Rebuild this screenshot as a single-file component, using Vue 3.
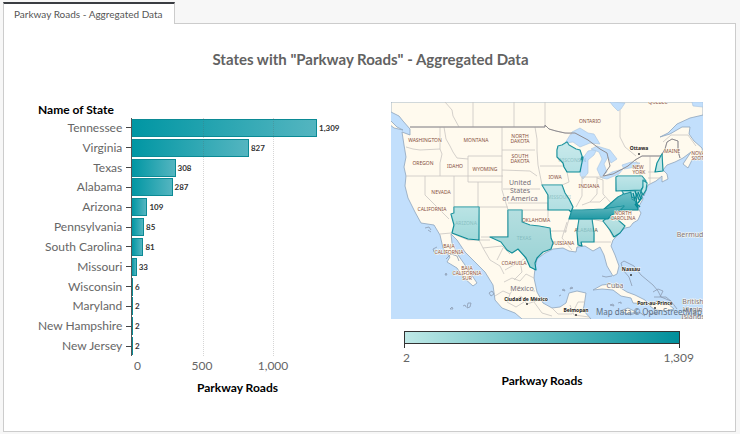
<script setup>
const domainMax = 1500
const rows = [
  ['Tennessee', 1309], ['Virginia', 827], ['Texas', 308], ['Alabama', 287],
  ['Arizona', 109], ['Pennsylvania', 85], ['South Carolina', 81], ['Missouri', 33],
  ['Wisconsin', 6], ['Maryland', 2], ['New Hampshire', 2], ['New Jersey', 2]
].map(([name, value]) => ({ name, value }))
const gridValues = [500, 1000]
const pct = (v) => (v / domainMax) * 100 + '%'
const fmt = (v) => v.toLocaleString('en-US')

const borders = [
  'M410 127H545V125L549 129L556 131L565 133L572 134',
  'M473 102V127M445 102L452 110L453 116L459 127M514 102V127M545 102V127',
  'M406 147L413 149L420 150L440 149V127M444 127L446 139L450 146L453 152L457 158L468 159',
  'M440 149L442 154L440 163V176M406 176H503M468 156V182H502V127M502 156H468M502 150H535M502 170L530 171L537 176',
  'M425 176V195L449 219M454 176V207M478 182V207H508M502 182V190L508 210M478 210V240H490M508 210V237H481',
  'M535 127L537 139L537 151L538 165L542 185M503 189H540M540 166H567M567 172L569 182L562 185M522 210H548M508 203H548L548 222',
  'M582 177V196L576 207M597 177V194L590 202L582 205M582 177H603M597 178L603 180M605 197L600 202L590 202',
  'M551 231H567M567 222L562 238L572 250M569 219L565 233M594 242H611M592 219L605 222M605 222L613 237',
  'M603 180V194L611 203M640 210H603M640 176V166L635 160L642 156H661M650 156V184M655 172H648M648 178H662',
  'M661 156L665 149L667 142L672 139L678 141L678 151L680 158M620 110V137L625 147L636 156',
  'M440 234L451 233L468 240H479M479 240L483 248L490 260L500 266L504 274M483 248L502 246L510 254M497 260L503 248M505 270L519 262L526 258',
  'M504 282L512 278L520 281L526 274L534 278M495 296L503 291L510 294L515 286L525 290L535 291M515 300L521 296L527 304L536 301M552 308L558 314H572L578 302H585',
  'M520 261L522 272L514 280M510 294L507 302L516 307L524 302M534 302L542 313L552 316M570 305L574 315L589 317',
  'M663 142L671 135L688 135L696 146'
]

const coasts = [
  'M391 102H703V115L690 118L677 124L668 133L660 137L670 134L682 127L690 127L689 134L694 141L702 148L703 154L692 160L688 168L683 164L691 152L683 158L675 162L667 165L663 170L667 174L668 179L662 182L662 176L656 181L648 185L644 196L641 190L643 199L638 208L641 213L638 220L633 223L630 227L625 228L618 235L613 240L611 246L615 255L619 266L617 274L613 276L607 266L604 255L600 247L593 251L585 246L577 247L576 252L569 251L563 248L553 249L545 253L537 259L535 268L534 278L537 292L543 303L552 308L560 307L566 303L569 293L577 291L586 293L584 306L583 310L591 319H522L515 313L502 308L495 300L493 285L485 272L473 260L465 252L457 240L451 234L452 243L458 255L465 265L473 277L477 283L473 286L463 277L457 268L447 262L450 257L443 248L440 235L434 225L421 223L415 212L412 206L408 198L405 186L406 176L404 167L406 157L404 145L402 132L410 135L410 129L403 121L399 116L391 112Z',
  'M397 127L389 119V124L394 128L403 130Z',
  'M593 290L602 285L611 284L619 287L627 292L635 295L645 300L648 304L633 303L631 298L621 296L613 290L602 289Z',
  'M650 306L657 301L667 303L674 309L665 311L655 310Z',
  'M620 311L628 308L636 312L628 314Z'
]

const lakes = [
  'M565 143L572 132L580 128L588 133L594 134L600 144L590 143L580 147L573 142Z',
  'M583 158L588 151L597 149L594 155L588 160V173L583 179L580 175Z',
  'M597 146L610 150L617 159L611 163L608 157L604 164L607 172L601 178L597 169L602 159L599 152L591 149Z',
  'M602 178L612 172L623 169L619 174L607 179Z',
  'M622 165L631 162L640 163L636 167L624 169Z',
  'M610 102L625 103L621 109L618 111L613 106Z',
  'M692 102L693 106L703 107V102Z'
]

const islands = [
  'M425 228l4-1 2 3M428 230l3 2M434 252l-1-3 4-2M445 275l1-2 1 2ZM450 309l2-2 1 2ZM463 306l2-1 1 2M467 308l1-5 3 0-1 4Z',
  'M489 293l3-2 2 3-3 2ZM446 259l5-5 6 2 2 5',
  'M602 276l4 1 6-1M621 263l3-2 10 5 7 9 12 10 5 6 3 6 10 4 6 8M621 263l2 7 6 7 3 9M653 292l5-3 5 2-3 6-6 0M660 297l6 0 6 5',
  'M610 305l3-1 1 2ZM618 303l3-1 0 2M562 290l2-1 1 2ZM570 289l1-2 2 1ZM559 296l2-1M647 310l4 4 9-1M630 315l9-3 6 4'
]

const states = [
  { id: 'AZ', fill: '#a0d9da', d: 'M454 207H479V240L468 239L452 233L454 225L451 214L454 213Z' },
  { id: 'TX', fill: '#98d2d4', d: 'M508 210H522V222L530 225L539 226L550 228L551 238L553 243L551 249L543 252L537 258L535 263L536 270L530 267L526 258L518 249L512 253L507 250L501 242L490 237H508Z' },
  { id: 'WI', fill: '#b5e1e4', d: 'M558 146L562 145L567 142L569 145L576 149L580 150L582 156L581 160L583 157L580 172H567L564 167L563 163L557 157V150Z' },
  { id: 'MO', fill: '#afdee1', d: 'M542 185H562L565 193L569 199L573 207L571 212L569 210H548V195L545 190Z' },
  { id: 'AL', fill: '#9dd5d7', d: 'M579 219H592L594 233V242H581L582 246L578 245L577 232Z' },
  { id: 'SC', fill: '#a3d8da', d: 'M603 221L607 218H615L618 220L625 226L620 233L614 237L610 230Z' },
  { id: 'PA', fill: '#a8dce0', d: 'M616 177L618 176H642L646 181L643 187L641 190L616 191Z' },
  { id: 'NH', fill: '#b9e5e5', d: 'M655 172L657 163L662 154L663 171Z' },
  { id: 'NJ', fill: '#b9e5e5', d: 'M643 180L647 183L646 190L643 195L641 191L643 187Z' },
  { id: 'VA', fill: '#3da9b3', d: 'M603 210L611 203L618 197L622 195L626 191L631 193L632 199L637 202L638 210Z' },
  { id: 'MD', fill: '#b0dfe1', d: 'M622 191H640L642 198L639 200L637 193L635 199L632 197L631 192L624 194Z' },
  { id: 'TN', fill: '#239aa5', d: 'M572 210L582 210L604 209L624 206L617 213L611 215L608 219H569Z' }
]

const toPlace = ([name, x, y]) => ({ name, x, y })

const places = [
  ['WASHINGTON', 425, 142], ['MONTANA', 476, 142], ['OREGON', 423, 165], ['IDAHO', 455, 168],
  ['WYOMING', 485, 171], ['NEVADA', 441, 194], ['CALIFORNIA', 432, 211], ['ONTARIO', 590, 123],
  ['IOWA', 555, 179], ['INDIANA', 589, 188], ['MAINE', 672, 153], ['OKLAHOMA', 536, 222],
  ['LOUISIANA', 561, 245], ['ALABAMA', 586, 232], ['NORTH', 520, 138], ['DAKOTA', 520, 143],
  ['SOUTH', 520, 158], ['DAKOTA', 520, 163], ['NEW', 638, 169], ['YORK', 639, 174],
  ['BAJA', 449, 248], ['CALIFORNIA', 449, 254], ['BAJA', 467, 270],
  ['CALIFORNIA', 467, 275], ['SUR', 467, 280], ['COAHUILA', 514, 265], ['NOVA', 698, 155], ['SCOTIA', 700, 160],
  ['QUEBEC', 658, 104]
].map(toPlace)

const placesOverStates = [['NORTH', 623, 215], ['CAROLINA', 623, 220]].map(toPlace)

const faint = [
  ['ARIZONA', 466, 225], ['TEXAS', 524, 240], ['WISCONSIN', 572, 162], ['MISSOURI', 559, 199], ['ALABAMA', 586, 232]
].map(toPlace)

const countries = [
  ['United', 520, 185], ['States', 520, 193], ['of America', 520, 201], ['México', 522, 291], ['Cuba', 615, 288],
  ['Bermuda', 692, 237], ['British', 693, 304], ['Virgin', 693, 312], ['Islands', 693, 319]
].map(toPlace)

const capitals = [
  ['Ottawa', 639, 150, 639, 154], ['Nassau', 631, 271, 631, 275],
  ['Ciudad de México', 526, 301, 527, 304], ['Belmopan', 576, 312, 576, 315],
  ['Port-au-Prince', 655, 305, 655, 308]
].map(([name, x, y, cx, cy]) => ({ name, x, y, cx, cy }))
</script>

<template>
  <div class="page">
    <div class="tabs" role="tablist">
      <button class="tab" type="button" role="tab" aria-selected="true">Parkway Roads - Aggregated Data</button>
      <div class="tab-rest"></div>
    </div>
    <main class="panel">
      <h1 class="title">States with "Parkway Roads" - Aggregated Data</h1>
      <div class="columns">
        <section class="chart">
          <h2 class="heading">Name of State</h2>
          <div class="body">
            <div class="names">
              <div v-for="r in rows" :key="r.name" class="name">{{ r.name }}</div>
            </div>
            <div class="ticks">
              <i v-for="r in rows" :key="r.name" class="tick"></i>
            </div>
            <div class="plot">
              <div v-for="r in rows" :key="r.name" class="row">
                <div class="bar" :style="{ width: pct(r.value) }"></div>
                <span class="value">{{ fmt(r.value) }}</span>
              </div>
              <i v-for="g in gridValues" :key="g" class="grid-line" :style="{ left: pct(g) }"></i>
            </div>
            <div class="axis">
              <span class="zero">0</span>
              <span v-for="g in gridValues" :key="g" class="axis-label" :style="{ left: pct(g) }">{{ fmt(g) }}</span>
            </div>
            <h2 class="heading axis-title">Parkway Roads</h2>
          </div>
        </section>

        <section class="map-side">
          <svg class="map" viewBox="391 102 312 217" role="img" aria-label="Map of parkway roads by state">
            <defs>
              <linearGradient id="shine" x1="0" y1="0" x2="0" y2="1">
                <stop offset="0" stop-color="#fff" stop-opacity="0.28" />
                <stop offset="1" stop-color="#fff" stop-opacity="0" />
              </linearGradient>
            </defs>
            <rect class="sea" x="391" y="102" width="312" height="217" />
            <path v-for="(d, i) in coasts" :key="'c' + i" class="land" :d="d" />
            <path v-for="(d, i) in lakes" :key="'l' + i" class="lake" :d="d" />
            <path v-for="(d, i) in borders" :key="'b' + i" class="border" :d="d" />
            <path class="nation" d="M410 127H545V125L549 129L556 131L565 133L575 133L588 140L600 149L607 153L610 166L603 176L613 174L628 166L635 160L642 156H661L665 149L667 142L672 139L678 141V151L680 158" />
            <path v-for="(d, i) in islands" :key="'i' + i" class="island" :d="d" />
            <text v-for="(p, i) in countries" :key="'n' + i" class="country" :x="p.x" :y="p.y">{{ p.name }}</text>
            <text v-for="(p, i) in places" :key="'p' + i" class="place" :x="p.x" :y="p.y">{{ p.name }}</text>
            <g v-for="s in states" :key="s.id">
              <path class="state" :d="s.d" :fill="s.fill" />
              <path :d="s.d" fill="url(#shine)" />
            </g>
            <path class="bay" d="M635 191L637 197L636 203L640 207M633 193L635 200M638 192L641 199L638 203M635 204L638 208" />
            <text v-for="p in faint" :key="p.name" class="place faint" :x="p.x" :y="p.y">{{ p.name }}</text>
            <text v-for="p in placesOverStates" :key="p.name" class="place" :x="p.x" :y="p.y">{{ p.name }}</text>
            <g v-for="c in capitals" :key="c.name">
              <circle class="dot" :cx="c.cx" :cy="c.cy" r="1" />
              <text class="capital" :x="c.x" :y="c.y">{{ c.name }}</text>
            </g>
            <text class="credit" x="702" y="315">Map data © OpenStreetMap</text>
          </svg>
          <div class="legend">
            <div class="ramp"></div>
            <div class="ends"></div>
            <div class="range"><span class="end">2</span><span class="end">1,309</span></div>
            <h2 class="heading legend-title">Parkway Roads</h2>
          </div>
        </section>
      </div>
    </main>
  </div>
</template>

<style>
body {
  margin: 0;
  background: #f7f7f7;
}
</style>

<style scoped>
.page {
  box-sizing: border-box;
  display: flex;
  flex-direction: column;
  min-height: 100vh;
  padding: 2px 4px 2px 3px;
  font-family: Lato, "Liberation Sans", sans-serif;
  color: #666;
}
.tabs {
  display: flex;
  height: 22px;
}
.tab {
  border: 0;
  border-top: 2px solid #3a3d42;
  border-left: 1px solid #ccc;
  border-right: 1px solid #ccc;
  padding: 0 11px 0 10px;
  background: #fff;
  color: #555;
  font: 10px/18px Lato, "Liberation Sans", sans-serif;
  white-space: nowrap;
}
.tab-rest {
  flex: 1;
  border-bottom: 1px solid #ccc;
}
.panel {
  flex: 1;
  border: 1px solid #ccc;
  border-top: 0;
  padding: 25px 32px 0 34px;
  background: #fff;
}
.title {
  margin: 0 0 33px;
  font-size: 15px;
  line-height: 20px;
  font-weight: 700;
  text-align: center;
  color: #626262;
}
.columns {
  display: grid;
  grid-template-columns: 306fr 312fr;
  gap: 47px;
  align-items: start;
}
.heading {
  margin: 0;
  font-size: 12px;
  line-height: 16px;
  font-weight: 700;
  color: #000;
}
.body {
  display: grid;
  grid-template-columns: 81px 12px 1fr;
  grid-template-rows: 238px auto auto;
}
.names,
.ticks,
.plot {
  display: grid;
  grid-template-rows: repeat(12, 1fr);
  align-items: center;
}
.name {
  font-size: 12px;
  line-height: 18px;
  text-align: right;
  white-space: nowrap;
}
.tick {
  height: 1px;
  margin-left: 7px;
  background: #444;
}
.plot {
  position: relative;
  border-left: 1px solid #555;
}
.row {
  display: flex;
  align-items: center;
  gap: 2px;
}
.bar {
  box-sizing: border-box;
  height: 18px;
  min-width: 1px;
  border: 1px solid #0b8a95;
  border-left: 0;
  background: linear-gradient(90deg, #0096a3, #54b5c0);
}
.value {
  font: 700 8px/10px Lato, "Liberation Sans", sans-serif;
  color: #333;
}
.grid-line {
  position: absolute;
  top: 0;
  bottom: 0;
  border-left: 1px dotted rgba(90, 90, 90, 0.25);
}
.axis {
  grid-column: 3;
  position: relative;
  height: 16px;
  margin-top: 2px;
  font-size: 12px;
  line-height: 16px;
}
.zero {
  margin-left: 3px;
}
.axis-label {
  position: absolute;
  top: 0;
  transform: translateX(-50%);
}
.axis-title {
  grid-column: 3;
  margin-top: 6px;
  text-align: center;
}
.map {
  display: block;
  width: 100%;
  height: auto;
  font-family: "Noto Sans", "Open Sans", sans-serif;
}
.sea {
  fill: #c2dffc;
}
.land {
  fill: #fffaee;
  stroke: #8ea4bd;
  stroke-width: 0.8;
}
.lake {
  fill: #c2dffc;
  stroke: #a6c2df;
  stroke-width: 0.6;
}
.border,
.island,
.nation {
  fill: none;
  stroke: #c9c5c1;
  stroke-width: 0.8;
}
.island {
  stroke: #8c9bb0;
}
.nation {
  stroke: #8f8c90;
  stroke-width: 1;
}
.state {
  stroke: #078995;
  stroke-width: 1.2;
  stroke-linejoin: round;
}
.bay {
  fill: none;
  stroke: #078995;
  stroke-width: 1.4;
}
.place,
.country,
.capital {
  text-anchor: middle;
  paint-order: stroke;
  stroke: #fffaee;
  stroke-width: 1px;
}
.place {
  font-size: 5px;
  fill: #854f3d;
}
.faint {
  stroke: none;
  fill: #4e9094;
  opacity: 0.4;
}
.country {
  font-size: 7px;
  fill: #77717b;
}
.capital {
  font-size: 5px;
  font-weight: 700;
  fill: #222;
}
.dot {
  fill: #333;
}
.credit {
  font-size: 8px;
  text-anchor: end;
  fill: #5f7083;
}
.legend {
  margin: 12px 23px 0 13px;
}
.ramp {
  box-sizing: border-box;
  height: 13px;
  border: 1px solid #333;
  background: linear-gradient(90deg, #bfe9e7, #008f9b);
}
.ends {
  height: 4px;
  border: solid #333;
  border-width: 0 1px;
}
.range {
  display: flex;
  justify-content: space-between;
  margin: 2px -14px 0 -1px;
  font-size: 12px;
  line-height: 16px;
}
.legend-title {
  margin-top: 7px;
  text-align: center;
}
</style>
